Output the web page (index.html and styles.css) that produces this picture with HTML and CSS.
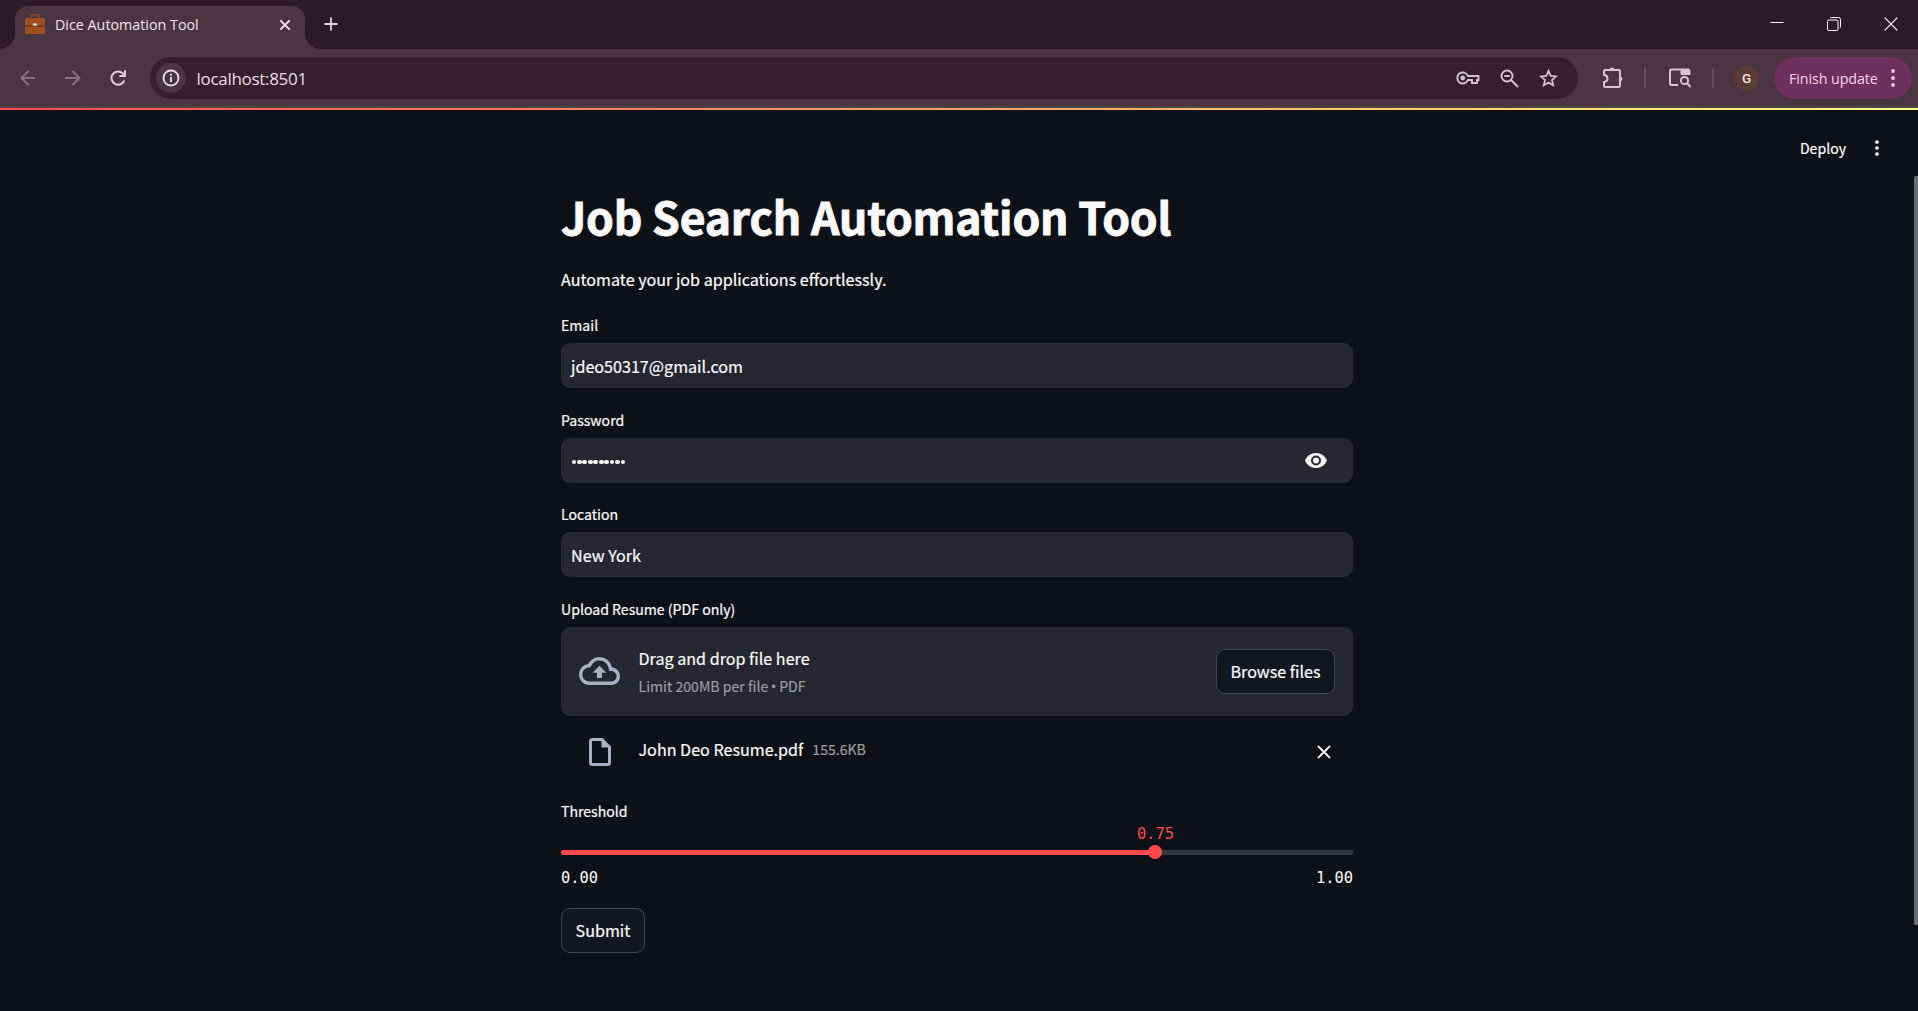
FILE: index.html
```html
<!DOCTYPE html>
<html lang="en">
<head>
<meta charset="utf-8">
<title>Dice Automation Tool</title>
<link rel="stylesheet" href="styles.css">
</head>
<body>
<header class="browser">
  <div class="tabstrip">
    <div class="tab">
      <svg class="favicon" width="20" height="20" viewBox="0 0 20 20"><path d="M6 5V2.2Q6 .8 7.400.8h5.200q1.400 0 1.400 1.400V5" fill="none" stroke="#8e451b" stroke-width="1.500"/><rect x="0" y="4" width="20" height="16" rx="1.500" fill="#9f501e"/><path d="M0 12h20" stroke="#6f2c13" stroke-width="1.200"/><rect x="7.500" y="9" width="5" height="3" rx="1" fill="#dedbd6" stroke="#8a3c16" stroke-width=".6"/></svg>
      <span class="tab-title">Dice Automation Tool</span>
      <svg class="tab-close" width="12" height="12" viewBox="0 0 12 12"><path d="M1.300 1.300l9.400 9.400M10.700 1.300l-9.400 9.400" stroke="#f3e3ed" stroke-width="1.900"/></svg>
    </div>
    <svg class="newtab" width="14" height="14" viewBox="0 0 14 14"><path d="M7 .5v13M.5 7h13" stroke="#e6cfdd" stroke-width="1.800"/></svg>
    <div class="window-controls">
      <svg width="14" height="14" viewBox="0 0 14 14"><path d="M.5 5.500h13" stroke="#fff"/></svg>
      <svg width="14" height="14" viewBox="0 0 14 14" fill="none" stroke="#fff"><rect x=".5" y="3" width="10.500" height="10.500" rx="1.300"/><path d="M3 1.200Q3.400.5 4.500.5H11.500Q13.500.5 13.500 2.500V9.500Q13.500 10.600 12.800 11"/></svg>
      <svg width="14" height="14" viewBox="0 0 14 14"><path d="M.7.7l12.600 12.600M13.300.7L.7 13.300" stroke="#fff" stroke-width="1.200"/></svg>
    </div>
  </div>
  <div class="toolbar">
    <div class="nav">
      <svg width="16" height="16" viewBox="0 0 16 16" fill="none" stroke="#887080" stroke-width="1.900"><path d="M15 8H2M8.500 1L1.500 8l7 7"/></svg>
      <svg width="16" height="16" viewBox="0 0 16 16" fill="none" stroke="#887080" stroke-width="1.900"><path d="M0 8h14M7.500 1l7 7-7 7"/></svg>
      <svg width="16" height="16" viewBox="0 0 16 16" fill="none" stroke="#e3c6d8" stroke-width="2"><path d="M14.300 10.300A6.600 6.600 0 1 1 12.800 3.400L15 6M15 .3V6.100H9.300"/></svg>
    </div>
    <div class="omnibox">
      <span class="site-info"><svg width="18" height="18" viewBox="0 0 18 18"><circle cx="9" cy="9" r="7.500" fill="none" stroke="#f0dfe9" stroke-width="1.800"/><path d="M9 8v5M9 4.800v2" stroke="#f0dfe9" stroke-width="1.800"/></svg></span>
      <span class="url">localhost:8501</span>
      <div class="omni-actions">
        <svg width="24" height="14" viewBox="0 0 24 14" fill="none" stroke="#d6c3ce" stroke-width="1.900"><path d="M11.900 5H22.500V9H21V12H16V9H11.900A5.500 5.500 0 1 1 11.900 5Z"/><circle cx="6.700" cy="7" r="2.400" fill="#d6c3ce" stroke="none"/></svg>
        <svg width="19" height="19" viewBox="0 0 19 19" fill="none" stroke="#d6c3ce" stroke-width="1.900"><circle cx="7" cy="7" r="5.500"/><path d="M11 11l7 7M4.300 7h5.400"/></svg>
        <svg width="19" height="18" viewBox="0 0 19 18"><path d="M9.500 1.900l2.200 5 5.400.5-4.100 3.600 1.200 5.300-4.700-2.800-4.700 2.800L6 11 1.900 7.400l5.400-.5z" fill="none" stroke="#d6c3ce" stroke-width="1.700"/></svg>
      </div>
    </div>
    <div class="extensions">
      <svg width="22" height="22" viewBox="0 0 22 22"><path d="M2 4.300Q2 3 3.300 3H16.700Q18 3 18 4.300V18.700Q18 20 16.700 20H3.300Q2 20 2 18.700V15.200Q5.500 14.500 5.500 11.500T2 7.800Z" fill="none" stroke="#dec0d2" stroke-width="2"/><path d="M7.500 3a2.500 2.500 0 0 1 5 0zM18 9.200a2.500 2.500 0 0 1 0 5z" fill="#dec0d2"/></svg>
      <i class="divider"></i>
      <svg width="22" height="20" viewBox="0 0 22 20" fill="none" stroke="#dec0d2" stroke-width="2"><path d="M9 17H2.500Q1 17 1 15.500V3Q1 1.500 2.500 1.500H19Q20.500 1.500 20.500 3V7"/><path d="M12 2h8v4.500h-8z" fill="#dec0d2" stroke-width="1"/><circle cx="15.500" cy="12.500" r="3.600"/><path d="M18 15l3.500 4"/></svg>
      <i class="divider"></i>
    </div>
    <span class="avatar">G</span>
    <div class="update"><span>Finish update</span><svg width="4" height="18" viewBox="0 0 4 18" fill="#f5d3e7"><circle cx="2" cy="2" r="1.900"/><circle cx="2" cy="9" r="1.900"/><circle cx="2" cy="16" r="1.900"/></svg></div>
  </div>
</header>
<div class="decoration"></div>
<div class="app-header"><span>Deploy</span><svg width="4" height="16" viewBox="0 0 4 16" fill="#fafafa"><circle cx="2" cy="2" r="1.850"/><circle cx="2" cy="8" r="1.850"/><circle cx="2" cy="14" r="1.850"/></svg></div>
<main class="content">
  <h1>Job Search Automation Tool</h1>
  <p class="intro">Automate your job applications effortlessly.</p>
  <form class="form">
    <div class="field"><span class="label">Email</span><div class="input">jdeo50317@gmail.com</div></div>
    <div class="field"><span class="label">Password</span><div class="input password">
      <span class="dots"><i></i><i></i><i></i><i></i><i></i><i></i><i></i><i></i><i></i><i></i></span>
      <svg width="22" height="15" viewBox="0 0 22 15"><path d="M11 0C6 0 1.700 3.100 0 7.500 1.700 11.900 6 15 11 15s9.300-3.100 11-7.500C20.300 3.100 16 0 11 0zm0 12.500a5 5 0 1 1 0-10 5 5 0 0 1 0 10zm0-8a3 3 0 1 0 0 6 3 3 0 0 0 0-6z" fill="#fafafa"/></svg>
    </div></div>
    <div class="field"><span class="label">Location</span><div class="input">New York</div></div>
    <div class="field"><span class="label">Upload Resume (PDF only)</span>
      <div class="dropzone">
        <svg width="41" height="28" viewBox="0 0 24 16" preserveAspectRatio="none"><path d="M19.350 6.040A7.490 7.490 0 0 0 12 0C9.110 0 6.600 1.640 5.350 4.040A5.994 5.994 0 0 0 0 10c0 3.310 2.690 6 6 6h13c2.760 0 5-2.240 5-5 0-2.640-2.050-4.780-4.650-4.960zM19 14H6c-2.210 0-4-1.790-4-4 0-2.050 1.530-3.760 3.560-3.970l1.070-.11.500-.95A5.469 5.469 0 0 1 12 2c2.620 0 4.880 1.860 5.390 4.430l.3 1.500 1.530.11A2.980 2.980 0 0 1 22 11c0 1.650-1.350 3-3 3zM8 9h2.550v3h2.900V9H16l-4-4z" fill="#abb0c4"/></svg>
        <div class="drop-text"><span>Drag and drop file here</span><small>Limit 200MB per file <b class="bullet">•</b> PDF</small></div>
        <span class="button browse">Browse files</span>
      </div>
    </div>
  </form>
  <div class="file">
    <svg width="22" height="28" viewBox="0 0 22 28"><path d="M13 1.500H3.500Q1.500 1.500 1.500 3.500V24.500Q1.500 26.500 3.500 26.500H18.500Q20.500 26.500 20.500 24.500V9Z" fill="none" stroke="#abb0c4" stroke-width="3"/><path d="M12.500 1L21 9.500H12.500Z" fill="#abb0c4"/></svg>
    <span class="file-name">John Deo Resume.pdf</span><small>155.6KB</small>
    <svg class="remove" width="14" height="14" viewBox="0 0 14 14"><path d="M1 1l12 12M13 1L1 13" stroke="#fafafa" stroke-width="1.800"/></svg>
  </div>
  <div class="slider">
    <span class="label">Threshold</span>
    <div class="track"><div class="fill" style="width:75%"><span class="thumb"></span><span class="value">0.75</span></div></div>
    <div class="ticks"><span>0.00</span><span>1.00</span></div>
  </div>
  <span class="button submit">Submit</span>
</main>
<div class="scrollbar"></div>
</body>
</html>
```
FILE: styles.css
```css
* { box-sizing: border-box; }
body {
  margin: 0;
  height: 1011px;
  overflow: hidden;
  background: #0e1117;
  color: #fafafa;
  font-family: "Noto Sans CJK SC", "Noto Sans", sans-serif;
  font-size: 16.13px;
  font-weight: 400;
}
svg { display: block; flex: none; }

.browser { font-family: "Open Sans", "Noto Sans", sans-serif; }
.tabstrip {
  display: flex;
  height: 49px;
  padding: 6px 24px 0 15px;
  background: #2f1b26;
}
.tab {
  position: relative;
  display: flex;
  align-items: center;
  width: 290px;
  height: 43px;
  padding: 0 14px 6px 10px;
  border-radius: 13px 13px 0 0;
  background: #4b3541;
}
.tab::before, .tab::after {
  content: "";
  position: absolute;
  bottom: 0;
  width: 15px;
  height: 15px;
}
.tab::before { left: -15px; background: radial-gradient(circle at 0 0, transparent 14.5px, #4b3541 15px); }
.tab::after { right: -15px; background: radial-gradient(circle at 100% 0, transparent 14.5px, #4b3541 15px); }
.favicon { margin-top: -1px; }
.tab-title { margin-left: 10px; font-size: 14.3px; color: #f3e3ed; white-space: nowrap; }
.tab-close { margin-left: auto; }
.newtab { margin: 11px 0 0 19px; }
.window-controls { display: flex; gap: 43px; margin: 11px -4px 0 auto; }

.toolbar {
  display: flex;
  align-items: center;
  height: 59px;
  padding: 1px 6px 0 20px;
  background: #4b3541;
  border-bottom: 2px solid #4d4447;
}
.nav { display: flex; gap: 29px; width: 130px; }
.omnibox {
  display: flex;
  align-items: center;
  width: 1428px;
  height: 42px;
  padding: 0 20px 0 6px;
  border-radius: 21px;
  background: #36202c;
}
.site-info {
  display: grid;
  place-items: center;
  width: 30px;
  height: 30px;
  border-radius: 50%;
  background: #4b3541;
}
.url { margin-left: 10.5px; font-size: 17px; letter-spacing: -.3px; color: #eadde5; }
.omni-actions { display: flex; align-items: center; gap: 20px; margin-left: auto; }
.extensions { display: flex; align-items: center; gap: 22px; margin-left: 24px; }
.divider { width: 2px; height: 20px; margin: 0 1px 0 -2px; background: #664f5b; }
.divider:last-child { margin: 0 0 0 -1px; }
.avatar {
  display: grid;
  place-items: center;
  width: 25px;
  height: 25px;
  margin-left: 20px;
  border-radius: 50%;
  background: #5a3c34;
  color: #f3e6e2;
  font-family: Roboto, sans-serif;
  font-size: 13.5px;
  font-weight: 500;
}
.update {
  display: flex;
  align-items: center;
  justify-content: space-between;
  width: 138px;
  height: 42px;
  margin-left: auto;
  padding: 0 17px 0 15px;
  border-radius: 21px;
  background: #6e305c;
  color: #f7d5e9;
  font-size: 14.3px;
  letter-spacing: -.1px;
  white-space: nowrap;
}

.decoration { height: 2px; background: linear-gradient(90deg, #ff4b4b, #fffd80); }
.app-header {
  display: flex;
  align-items: center;
  justify-content: flex-end;
  gap: 29px;
  height: 66px;
  padding: 10px 39px 0 0;
  font-size: 14.1px;
}
.app-header span { margin-top: -1px; }
.app-header, .content { -webkit-text-stroke: .2px; }

.content { width: 792px; margin-left: 561px; }
h1 {
  height: 58px;
  margin: 11px 0 0;
  font-size: 44.5px;
  line-height: 58px;
  font-weight: 700;
  letter-spacing: -.2px;
  -webkit-text-stroke: .9px #fafafa;
  white-space: nowrap;
}
.intro { height: 28px; margin: 20px 0 22px; line-height: 28px; }
.form { display: flex; flex-direction: column; gap: 22.67px; }
.label { display: block; height: 20px; margin-bottom: 8px; font-size: 14.1px; line-height: 20px; }
.field { margin-top: -1px; }
.field:first-child { margin-top: 0; }
.input {
  display: flex;
  align-items: center;
  height: 45px;
  padding: 0 10px;
  border-radius: 9px;
  background: #262730;
}
.password { justify-content: space-between; padding-right: 26px; }
.dots { display: flex; gap: .9px; padding: 4px 0 0 .5px; }
.dots i { width: 4.6px; height: 4.6px; border-radius: 50%; background: #fafafa; }
.dropzone {
  display: flex;
  align-items: center;
  height: 89px;
  padding: 0 18px;
  border-radius: 9px;
  background: #262730;
}
.drop-text { display: flex; flex-direction: column; margin: 3px 0 0 18.5px; }
.drop-text span { line-height: 28px; }
small { color: #9c9c9f; font-size: 14.1px; line-height: 29px; }
.bullet { font: 400 15px/1 "Open Sans", sans-serif; margin: 0 -.5px; }
.button {
  display: flex;
  align-items: center;
  justify-content: center;
  height: 45px;
  border: 1px solid #41444c;
  border-radius: 9px;
  background: #131720;
}
.browse { width: 119px; margin-left: auto; }
.file { display: flex; align-items: center; height: 34px; margin-top: 19px; padding: 0 22px 0 28px; }
.file-name { margin: -5px 0 0 27.5px; line-height: 28px; }
.file small { margin: -4px 0 0 9px; }
.remove { margin-left: auto; }
.slider { margin-top: 32px; }
.fill { position: relative; height: 5px; border-radius: 3px; background: #ff4b4b; }
.slider .label { margin-bottom: 0; }
.track { height: 5px; margin-top: 29px; border-radius: 3px; background: #353841; }
.thumb { position: absolute; right: -7px; top: -5px; width: 14px; height: 14px; border-radius: 50%; background: #ff4b4b; }
.value, .ticks { font-family: "DejaVu Sans Mono", monospace; font-size: 15.4px; line-height: 20px; -webkit-text-stroke: 0; }
.value { position: absolute; right: -19px; bottom: 11px; color: #ff4b4b; }
.ticks { display: flex; justify-content: space-between; margin-top: 13px; }
.submit { width: 84px; margin-top: 20px; }
.scrollbar { position: absolute; right: 0; top: 176px; width: 4px; height: 749px; border-radius: 2px 0 0 2px; background: #6b6c70; }
```
